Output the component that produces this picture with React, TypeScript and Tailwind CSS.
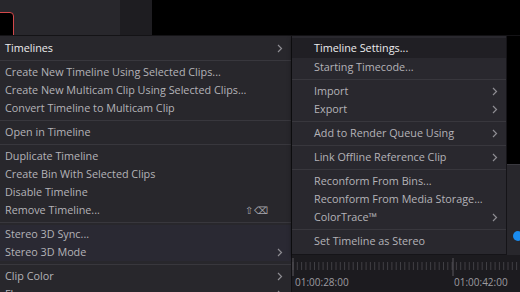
import React from "react";

type Item = { label: string; arrow?: boolean; shortcut?: string; hi?: boolean; tint?: boolean } | "sep";

const leftItems: Item[] = [
  { label: "Timelines", arrow: true, hi: true },
  "sep",
  { label: "Create New Timeline Using Selected Clips..." },
  { label: "Create New Multicam Clip Using Selected Clips..." },
  { label: "Convert Timeline to Multicam Clip" },
  "sep",
  { label: "Open in Timeline" },
  "sep",
  { label: "Duplicate Timeline" },
  { label: "Create Bin With Selected Clips" },
  { label: "Disable Timeline" },
  { label: "Remove Timeline...", shortcut: "⇧⌫" },
  "sep",
  { label: "Stereo 3D Sync...", tint: true },
  { label: "Stereo 3D Mode", arrow: true, tint: true },
  "sep",
  { label: "Clip Color", arrow: true },
  { label: "Flags", arrow: true },
];

const subItems: Item[] = [
  { label: "Timeline Settings...", hi: true },
  { label: "Starting Timecode..." },
  "sep",
  { label: "Import", arrow: true },
  { label: "Export", arrow: true },
  "sep",
  { label: "Add to Render Queue Using", arrow: true },
  "sep",
  { label: "Link Offline Reference Clip", arrow: true },
  "sep",
  { label: "Reconform From Bins..." },
  { label: "Reconform From Media Storage..." },
  { label: "ColorTrace™", arrow: true },
  "sep",
  { label: "Set Timeline as Stereo" },
];

function Chevron() {
  return (
    <svg width="6" height="9" viewBox="0 0 6 9" className="shrink-0">
      <path d="M1 1 L4.5 4.5 L1 8" fill="none" stroke="#8e8d93" strokeWidth="1.2" />
    </svg>
  );
}

function Rows({ items, padLeft, hiRow }: { items: Item[]; padLeft: string; hiRow: string }) {
  return (
    <>
      {items.map((it, i) =>
        it === "sep" ? (
          <div key={i} className="pt-[3px] pb-[2px]">
            <div className="h-px bg-[#38373d]" />
          </div>
        ) : (
          <div
            key={i}
            className={`flex items-center justify-between pr-[8px] ${padLeft} ${
              it.hi ? `${hiRow} text-[#ececee]` : "h-[18px] text-[#b4b3b8]"
            } ${it.tint ? "bg-[#2a2933]" : ""}`}
          >
            <span className="whitespace-nowrap">{it.label}</span>
            {it.shortcut && <span className="mr-[14px] text-[10px] tracking-[1px] text-[#a6a5aa]">{it.shortcut}</span>}
            {it.arrow && <Chevron />}
          </div>
        )
      )}
    </>
  );
}

function Ruler() {
  const ticks = [];
  for (let x = 1; x < 227; x += 4.3) {
    ticks.push(<line key={x} x1={x} y1={4} x2={x} y2={12} stroke="#403f44" strokeWidth="1" />);
  }
  return (
    <svg width="227" height="18" className="block">
      {ticks}
      <line x1="1" y1="0" x2="1" y2="18" stroke="#5a595e" />
      <line x1="161" y1="0" x2="161" y2="18" stroke="#5a595e" />
    </svg>
  );
}

export default function App() {
  return (
    <div
      className="w-[520px] h-[292px] overflow-hidden bg-black flex flex-col text-[10.8px] leading-none"
      style={{ fontFamily: '"Open Sans", "Noto Sans", sans-serif' }}
    >
      {/* top background panels */}
      <div className="flex h-[35px] shrink-0">
        <div className="w-[120px] bg-[#28272c] pt-[12px]">
          <div className="ml-[-10px] h-[30px] w-[24px] rounded-[4px] border-[1.5px] border-[#d2484a] bg-black" />
        </div>
        <div className="w-[32px] bg-[#1e1d21]" />
        <div className="flex-1 bg-black" />
      </div>

      <div className="flex flex-1 border-t border-[#141316]">
        {/* main context menu */}
        <div className="w-[292px] shrink-0 bg-[#28272c] pt-[3px] border-r border-[#111013]">
          <Rows items={leftItems} padLeft="pl-[5px]" hiRow="h-[18px]" />
        </div>

        {/* right side */}
        <div className="flex flex-1 flex-col">
          <div className="flex">
            <div className="w-[215px] shrink-0 bg-[#29282e] pt-[2px] pb-[4px] border-r border-b border-[#151418] shadow-[0_2px_4px_rgba(0,0,0,0.6)]">
              <Rows items={subItems} padLeft="pl-[22px]" hiRow="h-[20px] bg-[#201f24]" />
            </div>
            <div className="flex flex-1 flex-col">
              <div className="h-[128px] bg-black" />
              <div className="flex-1 bg-[#28272c] border-t border-[#3a393f] relative">
                <div className="absolute left-[6px] top-[66px] h-[10px] w-[10px] rounded-full bg-[#1a8cf0]" />
              </div>
            </div>
          </div>
          <div className="flex-1 bg-[#1c1b1f] pt-[3px]">
            <Ruler />
            <div className="flex text-[10px] text-[#9c9ba0] pt-[1px]">
              <span className="pl-[3px] w-[162px]">01:00:28:00</span>
              <span>01:00:42:00</span>
            </div>
          </div>
        </div>
      </div>
    </div>
  );
}
